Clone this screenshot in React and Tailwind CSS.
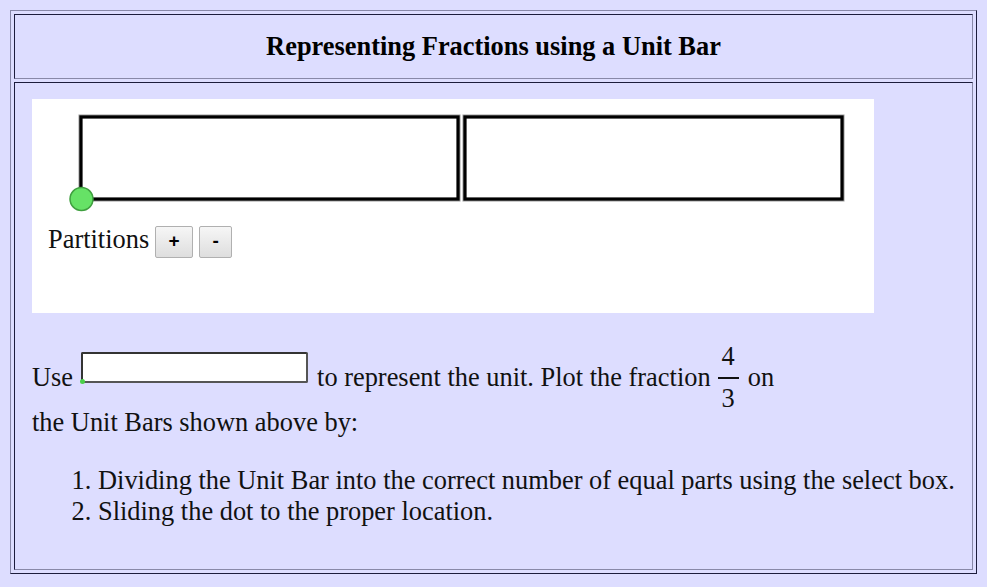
export default function App() {
  const serif = { fontFamily: '"Liberation Serif", "Times New Roman", serif' };
  const sans = { fontFamily: '"Liberation Sans", Arial, sans-serif' };
  return (
    <div className="w-[987px] h-[587px] bg-[#ddddff] pt-[10px] pl-[10px]" style={serif}>
      <div className="w-[967px] h-[564px] border border-t-[#8888a8] border-l-[#8888a8] border-r-[#1c1c3c] border-b-[#1c1c3c] p-[3px] flex flex-col gap-[3px]">
        <div className="h-[65px] border border-t-[#1c1c3c] border-l-[#1c1c3c] border-r-[#8888a8] border-b-[#8888a8] flex items-center justify-center">
          <h1 className="text-[26.4px] font-bold text-black leading-none">Representing Fractions using a Unit Bar</h1>
        </div>
        <div className="flex-1 border border-t-[#1c1c3c] border-l-[#1c1c3c] border-r-[#8888a8] border-b-[#8888a8] pl-[17px] pt-[16px] text-[26.4px] text-[#111]">
          <div className="w-[842px] h-[214px] bg-white">
            <svg width="842" height="115" className="block">
              <rect x="49" y="18" width="377" height="82" fill="white" stroke="#999" strokeWidth="5" />
              <rect x="49" y="18" width="377" height="82" fill="white" stroke="#000" strokeWidth="3.2" />
              <rect x="433" y="18" width="377" height="82" fill="white" stroke="#999" strokeWidth="5" />
              <rect x="433" y="18" width="377" height="82" fill="white" stroke="#000" strokeWidth="3.2" />
              <circle cx="49.5" cy="100" r="11.5" fill="#66e266" stroke="#3f9f3f" strokeWidth="1.5" />
            </svg>
            <div className="flex items-center pl-[16px] mt-[10px]">
              <span className="leading-[30px] mr-[6px] mb-[5px]">Partitions</span>
              <button className="w-[38px] h-[32px] border border-[#b0b0b0] rounded-[2px] bg-gradient-to-b from-[#f6f6f6] to-[#dedede] text-[19px] font-bold text-black flex items-center justify-center" style={sans}>+</button>
              <button className="ml-[6px] w-[33px] h-[32px] border border-[#b0b0b0] rounded-[2px] bg-gradient-to-b from-[#f6f6f6] to-[#dedede] text-[19px] font-bold text-black flex items-center justify-center" style={sans}>-</button>
            </div>
          </div>
          <div className="mt-[29px] flex items-center leading-[30px]">
            <span>Use</span>
            <span className="relative ml-[8px] mr-[9px] mb-[20px] w-[227px] h-[31px] bg-white border-2 border-t-[#333] border-l-[#333] border-r-[#555] border-b-[#555] rounded-[2px]">
              <span className="absolute left-[-3px] bottom-[-3px] w-[5px] h-[5px] rounded-full bg-[#4ad04a]"></span>
            </span>
            <span>to represent the unit. Plot the fraction</span>
            <span className="ml-[7px] mr-[9px] flex flex-col items-center">
              <span className="leading-[28px] px-[4px] pb-[7px]">4</span>
              <span className="h-[2px] w-full bg-[#111]"></span>
              <span className="leading-[28px] px-[4px] pt-[5px]">3</span>
            </span>
            <span>on</span>
          </div>
          <p className="leading-[30px] mt-[-5px]">the Unit Bars shown above by:</p>
          <ol className="list-decimal pl-[66px] mt-[28px] leading-[31px]">
            <li>Dividing the Unit Bar into the correct number of equal parts using the select box.</li>
            <li>Sliding the dot to the proper location.</li>
          </ol>
        </div>
      </div>
    </div>
  );
}
